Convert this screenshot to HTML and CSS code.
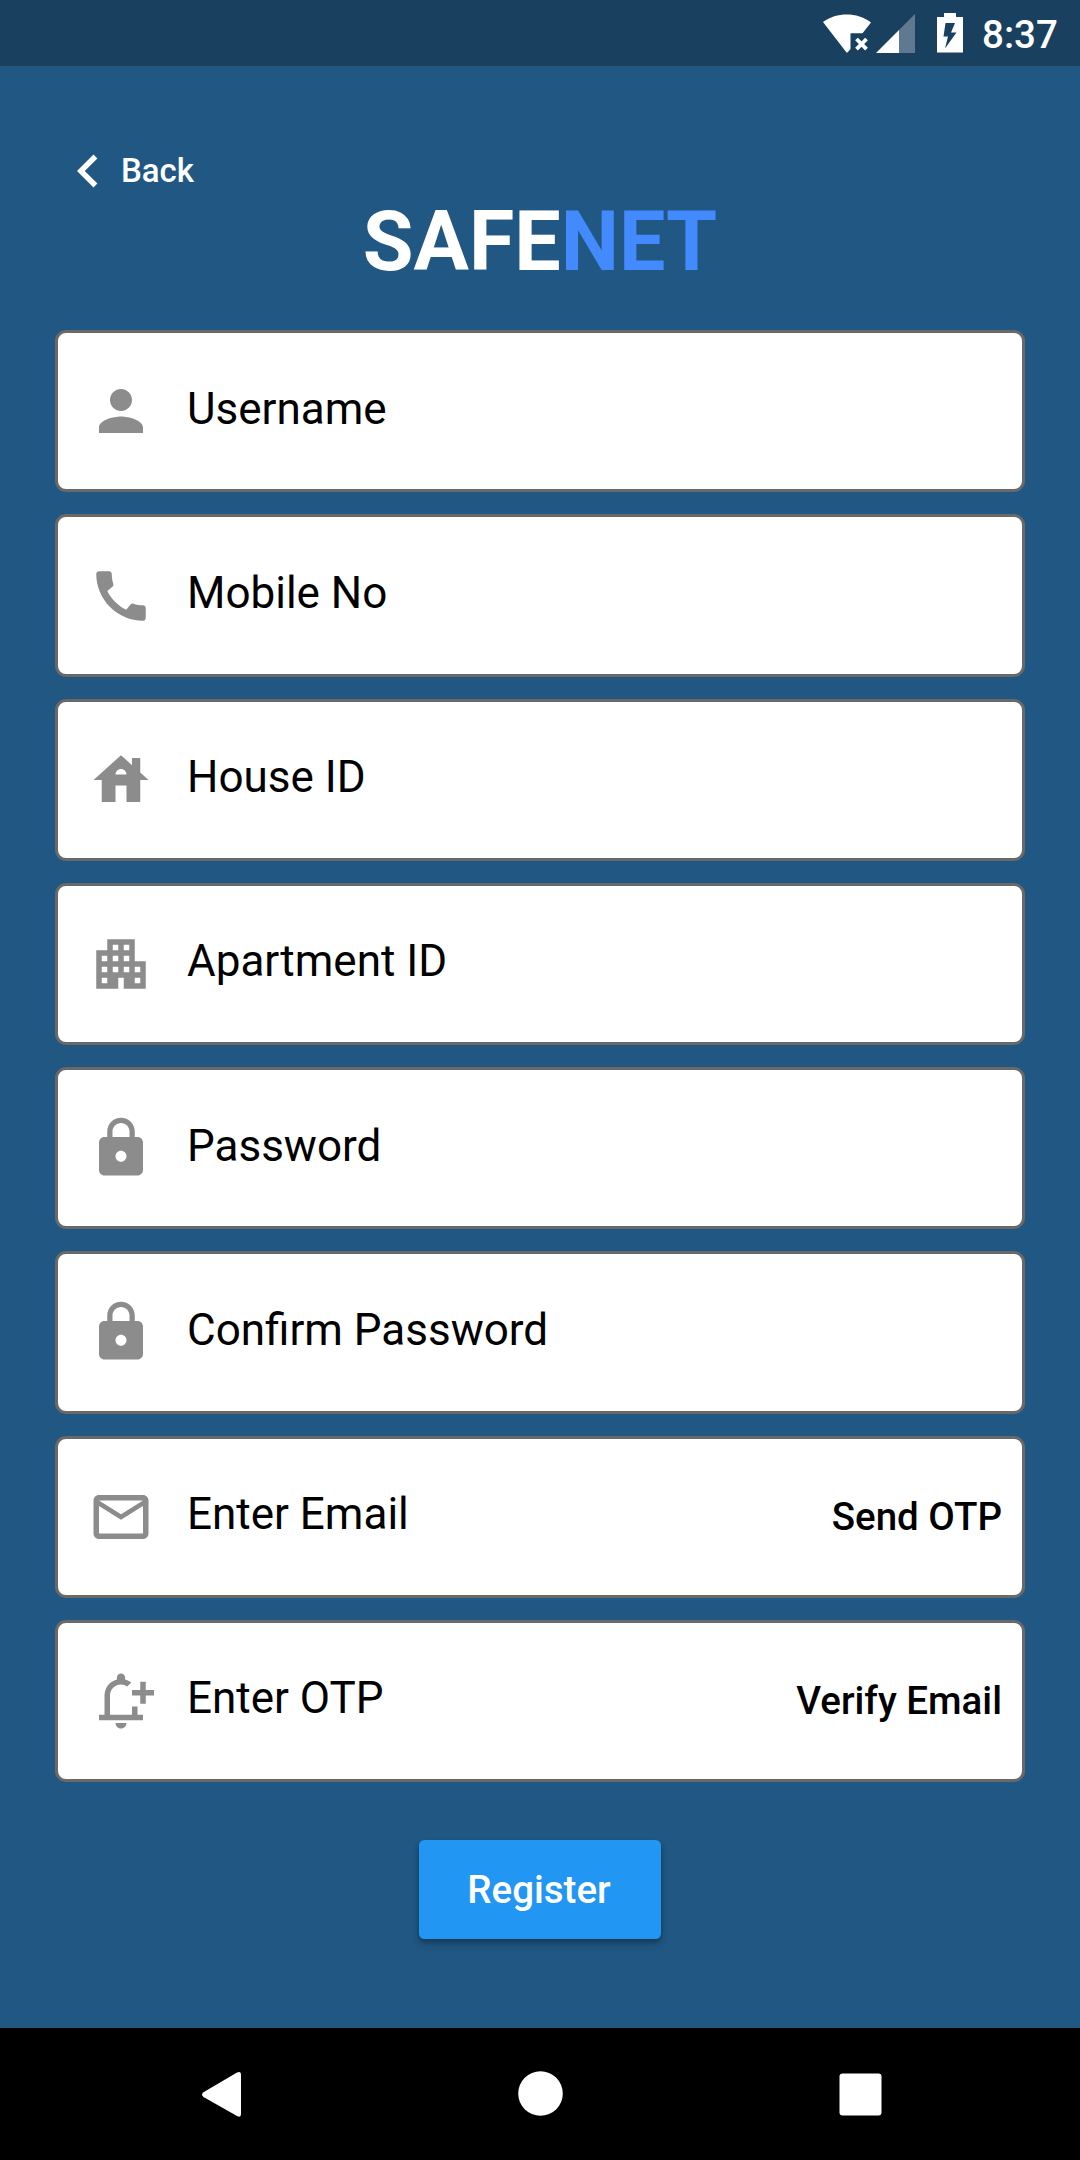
FILE: index.html
```html
<!DOCTYPE html>
<html lang="en">
<head>
<meta charset="utf-8">
<title>Safenet – Register</title>
<link rel="stylesheet" href="styles.css">
</head>
<body>
<header class="status-bar">
  <svg class="wifi" viewBox="0 0 48 39" width="48" height="39"><path d="M0 8C14-2 34-2 48 8.500L39.500 19.300H27.500V35L24.500 38.500H23.500z"/><path class="stroke" d="M33.500 25l10 10.200M43.500 25l-10 10.200"/></svg>
  <svg class="signal" viewBox="0 0 39 39" width="39" height="39"><path class="dim" d="M39 0V39H23V16z"/><path d="M23 16V39H0z"/></svg>
  <svg class="battery" viewBox="0 0 26 40" width="26" height="40"><path fill-rule="evenodd" d="M7 0H19V4H26V39.500H0V4H7zM8.500 10L6.500 23.500H11L8 35.500L19.500 19.500H14L18 10z"/></svg>
  <span class="clock">8:37</span>
</header>
<main class="screen">
  <a class="back"><svg class="icon" viewBox="0 0 24 24"><path d="M15.410 16.590L10.830 12l4.580-4.590L14 6l-6 6 6 6z"/></svg><span class="back-text">Back</span></a>
  <h1 class="brand">SAFE<span class="accent">NET</span></h1>
  <form class="fields">
    <div class="field"><svg class="icon" viewBox="0 0 24 24"><path d="M12 12c2.210 0 4-1.790 4-4s-1.790-4-4-4-4 1.790-4 4 1.790 4 4 4zm0 2c-2.670 0-8 1.340-8 4v2h16v-2c0-2.660-5.330-4-8-4z"/></svg><span class="label">Username</span></div>
    <div class="field"><svg class="icon" viewBox="0 0 24 24"><path d="M20.010 15.380c-1.230 0-2.420-.2-3.530-.56-.35-.12-.74-.03-1.010.24l-1.570 1.970c-2.830-1.350-5.480-3.900-6.890-6.830l1.950-1.660c.27-.28.35-.67.24-1.020-.37-1.110-.56-2.300-.56-3.530 0-.54-.45-.99-.99-.99H4.190C3.650 3 3 3.240 3 3.990 3 13.280 10.730 21 20.010 21c.71 0 .99-.63.99-1.180v-3.450c0-.54-.45-.99-.99-.99z"/></svg><span class="label">Mobile No</span></div>
    <div class="field"><svg class="icon" viewBox="0 0 24 24"><path d="M19 9.300V4h-3v2.600L12 3 2 12h3v8h5v-6h4v6h5v-8h3l-3-2.700zM10 10c0-1.100.9-2 2-2s2 .9 2 2h-4z"/></svg><span class="label">House ID</span></div>
    <div class="field"><svg class="icon" viewBox="0 0 24 24"><path d="M17 11V3H7v4H3v14h8v-4h2v4h8V11h-4zM7 19H5v-2h2v2zm0-4H5v-2h2v2zm0-4H5V9h2v2zm4 4H9v-2h2v2zm0-4H9V9h2v2zm0-4H9V5h2v2zm4 8h-2v-2h2v2zm0-4h-2V9h2v2zm0-4h-2V5h2v2zm4 12h-2v-2h2v2zm0-4h-2v-2h2v2z"/></svg><span class="label">Apartment ID</span></div>
    <div class="field"><svg class="icon" viewBox="0 0 24 24"><path d="M18 8h-1V6c0-2.760-2.240-5-5-5S7 3.240 7 6v2H6c-1.100 0-2 .9-2 2v10c0 1.100.9 2 2 2h12c1.100 0 2-.9 2-2V10c0-1.100-.9-2-2-2zm-6 9c-1.100 0-2-.9-2-2s.9-2 2-2 2 .9 2 2-.9 2-2 2zm3.100-9H8.900V6c0-1.710 1.390-3.100 3.100-3.100s3.100 1.390 3.100 3.100v2z"/></svg><span class="label">Password</span></div>
    <div class="field"><svg class="icon" viewBox="0 0 24 24"><path d="M18 8h-1V6c0-2.760-2.240-5-5-5S7 3.240 7 6v2H6c-1.100 0-2 .9-2 2v10c0 1.100.9 2 2 2h12c1.100 0 2-.9 2-2V10c0-1.100-.9-2-2-2zm-6 9c-1.100 0-2-.9-2-2s.9-2 2-2 2 .9 2 2-.9 2-2 2zm3.100-9H8.900V6c0-1.710 1.390-3.100 3.100-3.100s3.100 1.390 3.100 3.100v2z"/></svg><span class="label">Confirm Password</span></div>
    <div class="field"><svg class="icon" viewBox="0 0 24 24"><path d="M22 6c0-1.100-.9-2-2-2H4c-1.100 0-2 .9-2 2v12c0 1.100.9 2 2 2h16c1.100 0 2-.9 2-2V6zm-2 0l-8 5-8-5h16zm0 12H4V8l8 5 8-5v10z"/></svg><span class="label">Enter Email</span><span class="action">Send OTP</span></div>
    <div class="field"><svg class="icon" viewBox="0 0 24 24"><path d="M14 20c0 1.100-.9 2-2 2s-2-.9-2-2zM16 14v3H8v-7c0-2.210 1.790-4 4-4 .85 0 1.640.26 2.280.72l1.430-1.430c-.64-.51-1.390-.88-2.210-1.090V3.500c0-.83-.67-1.500-1.500-1.500s-1.500.67-1.500 1.500v.7C7.910 4.860 6 7.210 6 10v7H4v2h16v-2h-2v-3zM24 8h-3V5h-2v3h-3v2h3v3h2v-3h3z"/></svg><span class="label">Enter OTP</span><span class="action">Verify Email</span></div>
  </form>
  <button class="register" type="button">Register</button>
</main>
<nav class="nav-bar">
  <svg viewBox="0 0 46 46" width="46" height="46"><path d="M36 1.500Q40-.5 40 4V43Q40 47 36 45L2.500 26Q-.5 23.700 2.500 21.300z"/></svg>
  <svg viewBox="0 0 46 46" width="46" height="46"><circle cx="20.500" cy="22.500" r="22.300"/></svg>
  <svg viewBox="0 0 46 46" width="46" height="46"><rect x="1.500" y="2.500" width="42" height="42" rx="3"/></svg>
</nav>
</body>
</html>
```
FILE: styles.css
```css
* { box-sizing: border-box; }
body {
  margin: 0;
  width: 1080px;
  height: 2160px;
  display: flex;
  flex-direction: column;
  background: #205783;
  font-family: Roboto, sans-serif;
  overflow: hidden;
}
svg { display: block; flex: none; fill: currentColor; overflow: visible; }
.status-bar {
  height: 66px;
  display: flex;
  align-items: flex-start;
  padding: 0 23px 0 823px;
  background: #1a4060;
  color: #fff;
}
.wifi, .signal { margin-top: 14px; }
.wifi .stroke { fill: none; stroke: #fff; stroke-width: 3.8; }
.signal { margin-left: 5px; }
.signal .dim { opacity: .3; }
.battery { margin: 13px 0 0 22px; }
.clock {
  margin-left: 19px;
  font-size: 38.5px;
  font-weight: 500;
  line-height: 70px;
}
.screen {
  flex: 1;
  display: flex;
  flex-direction: column;
  padding: 72px 55px 0;
}
.icon { width: 66px; height: 66px; }
.back {
  height: 66px;
  display: flex;
  align-items: center;
  color: #fff;
  font-size: 33px;
  font-weight: 500;
}
.back-text { padding-bottom: 2px; }
.brand {
  margin: -11px 0 0;
  height: 97px;
  line-height: 97px;
  text-align: center;
  color: #fff;
  font-size: 82.5px;
  font-weight: 700;
}
.accent { color: #448aff; }
.fields {
  margin-top: 40.1px;
  display: flex;
  flex-direction: column;
  gap: 21.85px;
}
.field {
  height: 162.4px;
  display: flex;
  align-items: center;
  padding: 0 20px 0 30px;
  background: #fff;
  border: 3px solid #696969;
  border-radius: 11px;
  color: #8c8c8c;
}
.label {
  flex: 1;
  margin: -5px 0 0 33px;
  color: #000;
  font-size: 44px;
  line-height: 52px;
}
.action {
  padding-top: 1px;
  color: #000;
  font-size: 38.5px;
  font-weight: 500;
  line-height: 46px;
}
.register {
  align-self: center;
  width: 242px;
  height: 99px;
  margin: 57.4px 0 0;
  padding: 0 2px 0 0;
  border: 0;
  border-radius: 5.5px;
  background: #2196f3;
  color: #fff;
  font: 500 38.5px/99px Roboto, sans-serif;
  box-shadow: 0 3px 5px rgba(0, 0, 0, .28), 0 6px 8px rgba(0, 0, 0, .1);
}
.nav-bar {
  height: 132px;
  display: flex;
  justify-content: space-between;
  padding: 43px 196px 0 201px;
  background: #000;
  color: #fff;
}
```
